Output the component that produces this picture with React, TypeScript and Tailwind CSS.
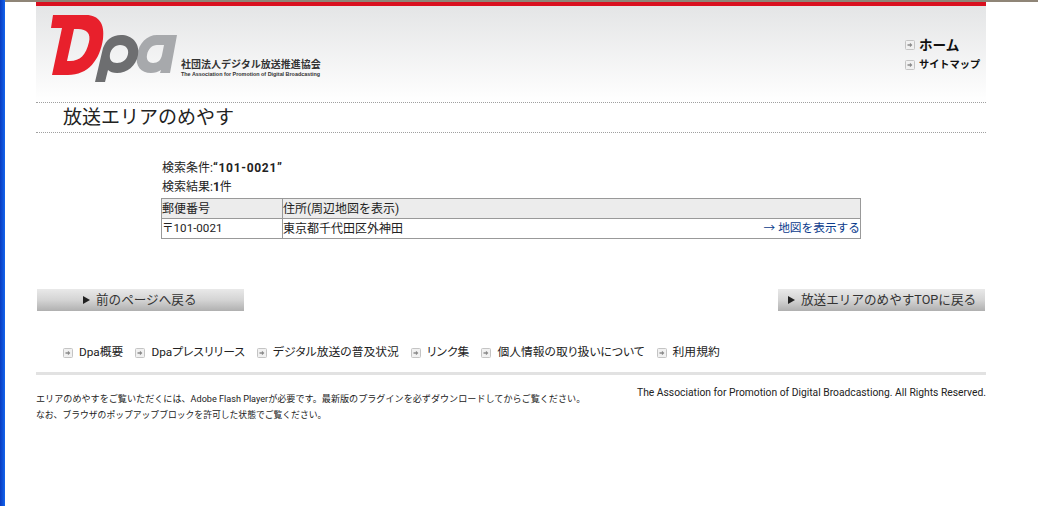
const jp = "font-['Roboto','Noto_Sans_CJK_JP',sans-serif]";

function ArrowBox() {
  return (
    <svg width="10" height="10" viewBox="0 0 10 10" className="shrink-0">
      <rect x="0.5" y="0.5" width="9" height="9" rx="1" fill="#f1f1f1" stroke="#c4c4c4" />
      <path d="M2.5 4.2h2.4V2.8L7.4 5 4.9 7.2V5.8H2.5z" fill="#8a8a8a" />
    </svg>
  );
}

function Logo() {
  return (
    <svg width="128" height="70" viewBox="51 14 128 70" className="shrink-0">
      {/* a */}
      <path
        fillRule="evenodd"
        fill="#a7a9ac"
        d="M157 35H177L170 73H160L161 70C158 72 155 73 151 73C141 73 135 66 137 55C139 43 147 35 157 35ZM157 45C152 45 148 49 147 55C146 60 149 63 153 63C158 63 161 60 162 55L164 45Z"
      />
      {/* p */}
      <path
        fillRule="evenodd"
        fill="#6d6e70"
        d="M121 35C132 35 140 43 138 55C136 66 127 73 117 73C113 73 110 72 108 70L105 82H95L103 48C106 40 112 35 121 35ZM120 45C115 45 111 49 110 54C109 60 112 63 117 63C122 63 127 60 128 54C129 49 126 45 120 45Z"
      />
      {/* D */}
      <path
        fillRule="evenodd"
        fill="#e8202c"
        d="M53 15H86C99 15 105 24 103 39C100 60 88 75 68 75H52L62 28H51ZM78 29H74L67 61H70C80 61 86 55 89 42C91 34 87 29 78 29Z"
      />
    </svg>
  );
}

function GrayButton({ label, pad }: { label: string; pad: string }) {
  return (
    <a className={`flex h-[22px] w-[207px] items-center bg-gradient-to-b from-[#e9e9e9] via-[#d4d4d4] to-[#b0b0b0] text-[12.6px] text-[#333] whitespace-nowrap ${pad}`}>
      <span className="mr-[6px] h-0 w-0 border-y-[4.5px] border-l-[7px] border-y-transparent border-l-[#222]" />
      {label}
    </a>
  );
}

const footerLinks = ["Dpa概要", "Dpaプレスリリース", "デジタル放送の普及状況", "リンク集", "個人情報の取り扱いについて", "利用規約"];

export default function App() {
  return (
    <div className={`flex h-[506px] w-[1038px] overflow-hidden bg-white ${jp}`}>
      <div className="w-[5px] shrink-0 bg-gradient-to-r from-[#0a3bc0] to-[#1464ee]" />
      <div className="flex-1">
        <div className="h-[2px] bg-[#8f8577]" />
        <div className="ml-[31px] w-[950px]">
          <header className="h-[100px] border-t-4 border-t-[#d9101f] bg-gradient-to-b from-[#e4e5e6] to-white">
            <div className="flex justify-between">
              <div className="flex pl-[15px] pt-[8px]">
                <Logo />
                <div className="ml-[2px] mt-[45px] text-[#333]">
                  <div className="text-[10px] font-bold leading-[12px]">社団法人デジタル放送推進協会</div>
                  <div className="font-['Liberation_Sans',sans-serif] text-[5.4px] font-bold leading-[6px] whitespace-nowrap">The Association for Promotion of Digital Broadcasting</div>
                </div>
              </div>
              <nav className="w-[81px] pt-[29px] text-[#111]">
                <a className="flex h-[20px] items-center gap-[4px] text-[13.6px] font-bold"><ArrowBox />ホーム</a>
                <a className="mt-[1px] flex h-[18px] items-center gap-[4px] text-[10.2px] font-bold whitespace-nowrap"><ArrowBox />サイトマップ</a>
              </nav>
            </div>
          </header>
          <h1 className="flex h-[31px] items-center border-y border-dotted border-y-[#a0a0a0] pl-[27px] text-[19px] leading-none text-[#222]">放送エリアのめやす</h1>

          <main className="pl-[125px] pt-[26px] text-[12px] text-[#222]">
            <p className="h-[19px] pl-px leading-[19px]">検索条件:<b className="tracking-[0.7px]">“101-0021”</b></p>
            <p className="h-[19px] pl-px leading-[19px]">検索結果:<b>1</b>件</p>
            <div className="mt-px w-[700px] border border-[#999]">
              <div className="flex h-[20px] items-center border-b border-b-[#999] bg-[#ececec] leading-none">
                <div className="flex h-full w-[121px] items-center border-r border-r-[#999]">郵便番号</div>
                <div>住所(周辺地図を表示)</div>
              </div>
              <div className="flex h-[19px] items-center leading-none">
                <div className="flex h-full w-[121px] items-center border-r border-r-[#999] text-[11.6px]">〒101-0021</div>
                <div className="flex flex-1 justify-between">
                  <span>東京都千代田区外神田</span>
                  <a className="text-[11.7px] text-[#0b3b8c]">→ 地図を表示する</a>
                </div>
              </div>
            </div>
          </main>

          <div className="ml-px mt-[50px] flex w-[948px] justify-between">
            <GrayButton label="前のページへ戻る" pad="pl-[46px]" />
            <GrayButton label="放送エリアのめやすTOPに戻る" pad="pl-[10px]" />
          </div>

          <nav className="mt-[30px] flex h-[22px] translate-y-px items-center gap-[12px] pl-[27px] text-[11.8px] text-[#222] [font-feature-settings:'palt']">
            {footerLinks.map((t) => (
              <a key={t} className="flex items-center gap-[6px] whitespace-nowrap"><ArrowBox />{t}</a>
            ))}
          </nav>

          <footer className="mt-[9px] flex justify-between border-t-[3px] border-t-[#e2e2e2] pt-[12px]">
            <div className="pt-[4px] text-[9.1px] leading-[16px] text-[#222]">
              <p>エリアのめやすをご覧いただくには、Adobe Flash Playerが必要です。最新版のプラグインを必ずダウンロードしてからご覧ください。</p>
              <p className="text-[8.8px]">なお、ブラウザのポップアップブロックを許可した状態でご覧ください。</p>
            </div>
            <p className="text-[10.3px] leading-[12px] text-[#222] whitespace-nowrap">The Association for Promotion of Digital Broadcastiong. All Rights Reserved.</p>
          </footer>
        </div>
      </div>
    </div>
  );
}
